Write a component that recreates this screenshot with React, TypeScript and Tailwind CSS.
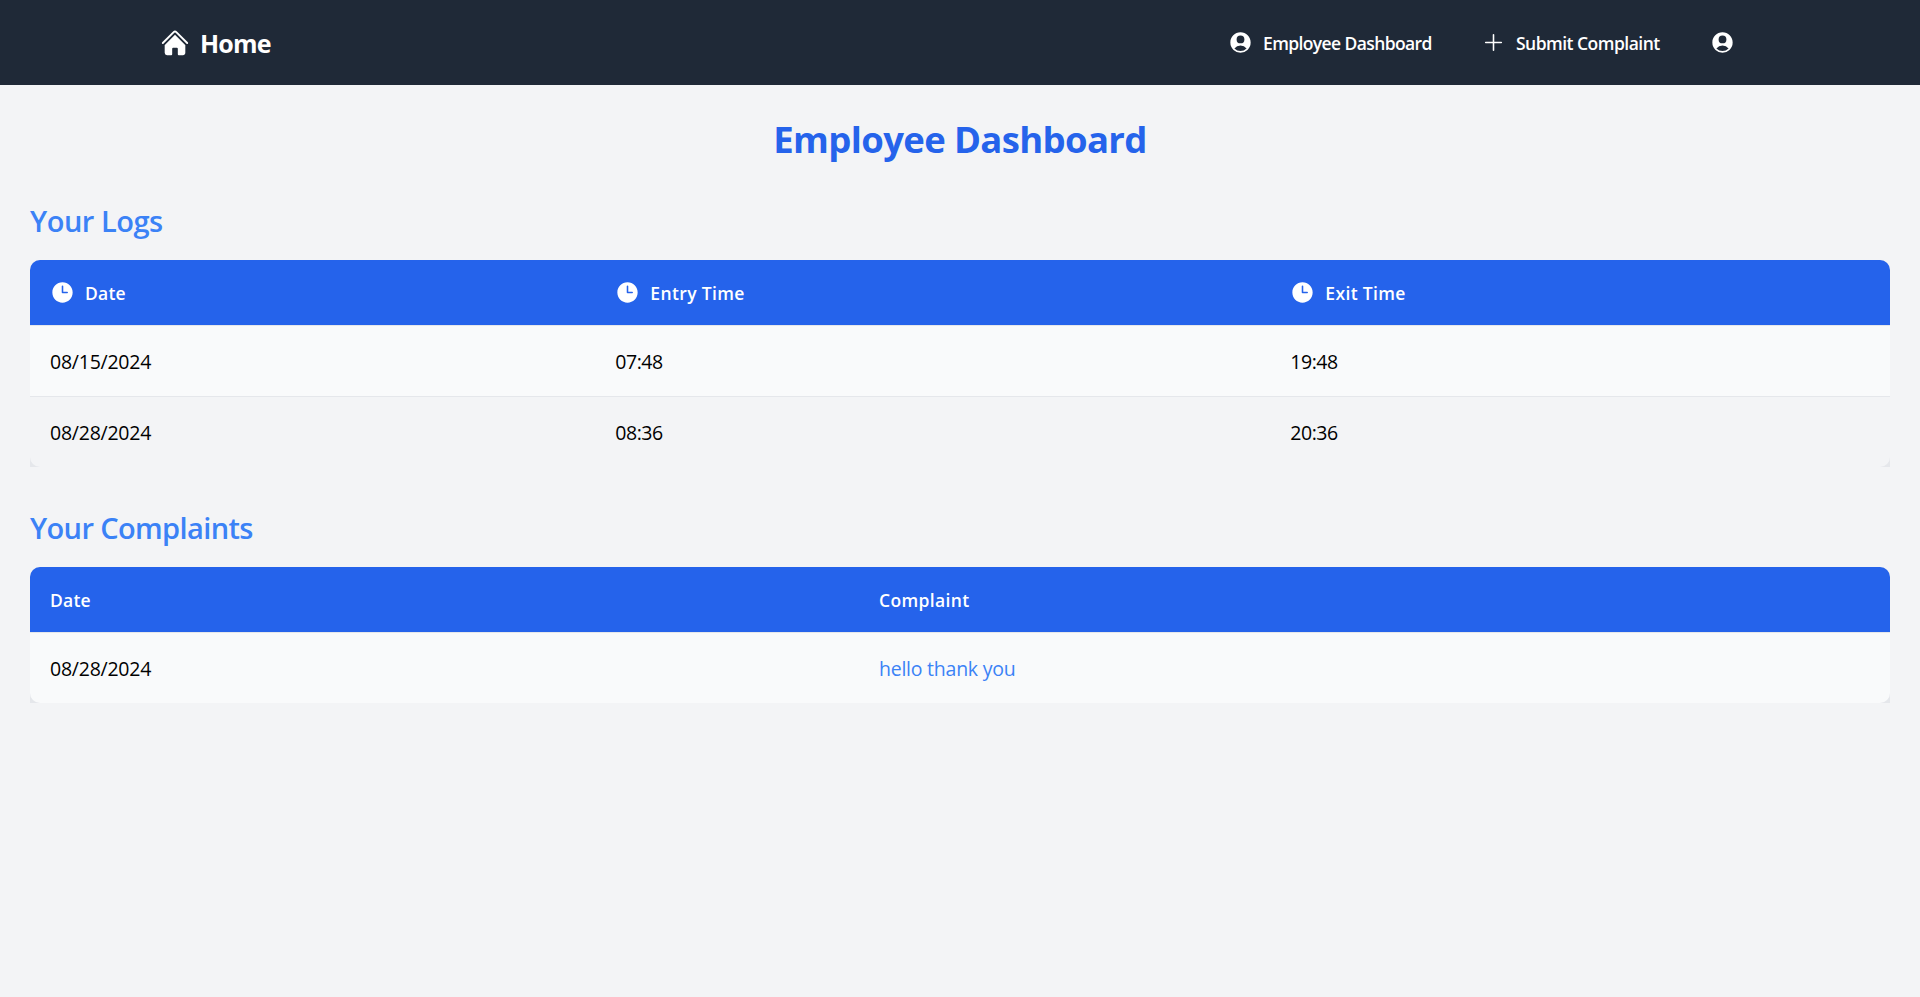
import type { ReactNode } from "react";
import { HiClock, HiHome, HiPlus, HiUserCircle } from "react-icons/hi2";

function NavBar() {
  return (
    <nav className="flex h-[85px] items-center bg-[#1f2937] text-white">
      <div className="mx-auto flex w-[1600px] items-center justify-between pr-[25px]">
        <a className="flex items-center gap-[10px] text-[25px] font-bold tracking-[-0.8px]">
          <HiHome className="size-[30px]" />
          <span className="pt-[2px] leading-[35px]">Home</span>
        </a>
        <div className="flex items-center text-[17.5px] font-semibold">
          <a className="flex w-[253px] items-center gap-[10px]">
            <HiUserCircle className="size-[25px]" />
            <span className="pt-px leading-[25px] tracking-[-0.61px]">Employee Dashboard</span>
          </a>
          <a className="flex w-[229px] items-center gap-[10px]">
            <HiPlus className="size-[25px]" />
            <span className="pt-px leading-[25px] tracking-[-0.52px]">Submit Complaint</span>
          </a>
          <HiUserCircle className="size-[25px]" />
        </div>
      </div>
    </nav>
  );
}

function TableCard({ children }: { children: ReactNode }) {
  return (
    <div className="rounded-t-[10px] bg-[#e5e7eb]">
      <div className="overflow-hidden rounded-[10px]">{children}</div>
    </div>
  );
}

const logGrid = "grid grid-cols-[565.3px_675px_1fr] items-center";
const complaintGrid = "grid grid-cols-[829px_1fr] items-center";
const headRow = "h-[65px] bg-[#2563eb] text-[17.5px] font-semibold text-white";
const bodyRow =
  "h-[71px] border-t border-[#e5e7eb] pt-[2px] text-[19.5px] leading-[30px] tracking-[-0.24px] text-black";

function ClockHead({ label, className }: { label: string; className: string }) {
  return (
    <div className="flex items-center gap-[10px] px-[20px]">
      <HiClock className="size-[25px]" />
      <span className={`pt-[2px] leading-[25px] ${className}`}>{label}</span>
    </div>
  );
}

const logs = [
  { date: "08/15/2024", entry: "07:48", exit: "19:48" },
  { date: "08/28/2024", entry: "08:36", exit: "20:36" },
];

export default function App() {
  return (
    <div className="min-h-screen bg-[#f3f4f6] font-['Open_Sans','Noto_Sans',sans-serif]">
      <NavBar />
      <main className="px-[30px] pt-[32px]">
        <h1 className="mb-[39px] text-center text-[36.5px] leading-[45px] font-bold tracking-[-0.65px] text-[#2563eb]">
          Employee Dashboard
        </h1>

        <section className="mb-[41px]">
          <h2 className="mb-[19px] text-[29px] leading-[40px] font-semibold tracking-[-0.47px] text-[#3b82f6]">
            Your Logs
          </h2>
          <TableCard>
            <div className={`${logGrid} ${headRow}`}>
              <ClockHead label="Date" className="tracking-[0.2px]" />
              <ClockHead label="Entry Time" className="tracking-[0.37px]" />
              <ClockHead label="Exit Time" className="tracking-[0.35px]" />
            </div>
            {logs.map((log, i) => (
              <div
                key={log.date}
                className={`${logGrid} ${bodyRow} ${i % 2 === 0 ? "bg-[#f9fafb]" : "bg-[#f3f4f6]"}`}
              >
                <div className="px-[20px]">{log.date}</div>
                <div className="px-[20px] tracking-[-0.45px]">{log.entry}</div>
                <div className="px-[20px] tracking-[-0.45px]">{log.exit}</div>
              </div>
            ))}
          </TableCard>
        </section>

        <section>
          <h2 className="mb-[19px] text-[29px] leading-[40px] font-semibold tracking-[-0.62px] text-[#3b82f6]">
            Your Complaints
          </h2>
          <TableCard>
            <div className={`${complaintGrid} ${headRow} pt-[2px]`}>
              <div className="px-[20px] tracking-[0.2px]">Date</div>
              <div className="px-[20px] tracking-[0.36px]">Complaint</div>
            </div>
            <div className={`${complaintGrid} ${bodyRow} bg-[#f9fafb]`}>
              <div className="px-[20px]">08/28/2024</div>
              <div className="px-[20px] text-[#3b82f6]">hello thank you</div>
            </div>
          </TableCard>
        </section>
      </main>
    </div>
  );
}
